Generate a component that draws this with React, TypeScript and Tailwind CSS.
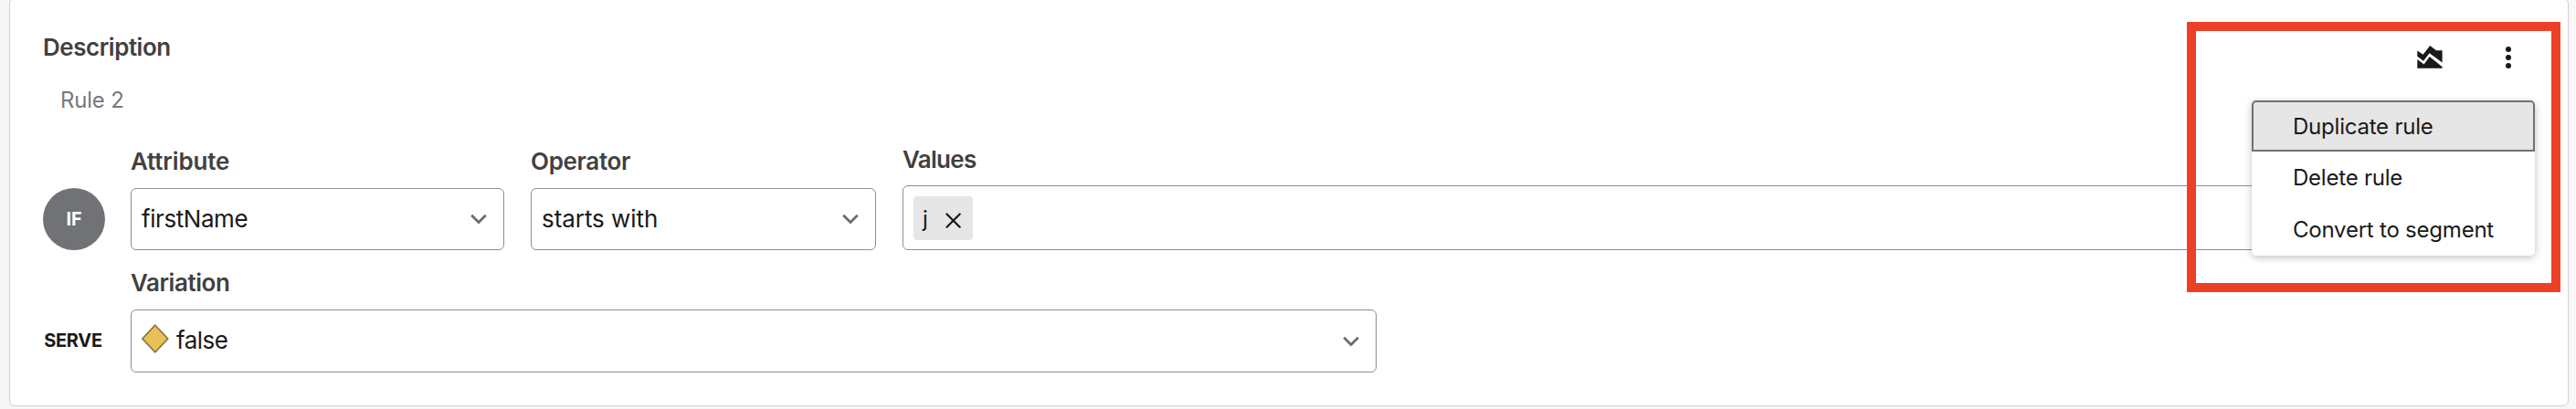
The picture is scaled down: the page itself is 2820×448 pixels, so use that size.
import React from "react";

function Chevron() {
  return (
    <svg width="20" height="14" viewBox="0 0 20 14" fill="none" className="block shrink-0">
      <path d="M2.2 2.8l7.8 7.8 7.8-7.8" stroke="#6c6d72" strokeWidth="2.8" strokeLinecap="butt" />
    </svg>
  );
}

function Label({ children, className }: { children: React.ReactNode; className: string }) {
  return (
    <div className={"h-8 text-[26px] leading-8 font-semibold text-[#414042] whitespace-nowrap " + className}>
      <span>{children}</span>
    </div>
  );
}

function Select({ children, className }: { children: React.ReactNode; className: string }) {
  return (
    <div className={"mt-[13px] flex w-full items-center justify-between rounded-[6px] border border-[#8b8e99] bg-white pr-[17px] pl-[11px] " + className}>
      {children}
      <Chevron />
    </div>
  );
}

function AreaIcon() {
  return (
    <svg width="28" height="26" viewBox="0 0 28 26" fill="#191919" className="block">
      <path d="M.3 5.6l6.3 4.2L14.2 0l6.8 5.3h6.6v13.1L13.6 8.2 7 16.8.3 11.7z" />
      <path d="M.3 15l7.3 5.6 6.1-8.7 13.9 11.3v1.6H.3z" />
    </svg>
  );
}

const valueText = "text-[26px] leading-8 text-[#191919] whitespace-nowrap";
const menuItem = "flex items-start pt-[13px] pl-[45px] text-[24px] leading-8 text-[#191919] whitespace-nowrap tracking-[-0.22px]";

export default function App() {
  return (
    <div className="relative h-[448px] w-[2820px] overflow-hidden bg-[#f7f7f7] font-['Inter',sans-serif]">
      <div className="-mt-[2px] ml-[10px] flex h-[447px] w-[2802px] flex-col rounded-[6px] border border-[#d1d1d3] bg-white pl-[36px]">
        <div className="flex h-[79px] items-start justify-between pt-[37px]">
          <Label className="tracking-[-0.47px]">Description</Label>
          <div className="mr-[62px] flex gap-[69px] pt-[14px]">
            <AreaIcon />
            <svg width="6" height="26" viewBox="0 0 6 26" fill="#191919" className="block">
              <circle cx="3" cy="4" r="3" />
              <circle cx="3" cy="13" r="3" />
              <circle cx="3" cy="22" r="3" />
            </svg>
          </div>
        </div>
        <div className="mt-[16px] ml-[19px] h-8 text-[24px] leading-8 tracking-[-0.2px] text-[#77787c]">
          <span>Rule 2</span>
        </div>
        <div className="mt-[34px] flex h-[114px] items-end">
          <div className="mr-[28px] flex size-[68px] items-center justify-center rounded-full bg-[#717276] text-[20px] font-bold tracking-[-0.3px] text-white">
            IF
          </div>
          <div className="mr-[29px] w-[409px]">
            <Label className="tracking-[-0.16px]">Attribute</Label>
            <Select className="h-[68px]">
              <span className={valueText + " pb-[1px] tracking-[-0.44px]"}>firstName</span>
            </Select>
          </div>
          <div className="mr-[29px] w-[378px]">
            <Label className="tracking-[-0.33px]">Operator</Label>
            <Select className="h-[68px]">
              <span className={valueText + " pb-[1px] tracking-[-0.06px]"}>starts with</span>
            </Select>
          </div>
          <div className="w-[1780px]">
            <Label className="tracking-[-0.7px]">Values</Label>
            <div className="mt-[12px] flex h-[71px] items-center rounded-[6px] border border-[#8b8e99] pt-[1px] pl-[11px]">
              <div className="flex h-12 w-[65px] items-center justify-between rounded-[4px] bg-[#e6e6e6] pr-[12px] pl-[10px] text-[24px] text-[#191919]">
                <span className="pt-[1px]">j</span>
                <svg width="18" height="18" viewBox="0 0 18 18" fill="none" className="mt-[5px] block">
                  <path d="M1.5 1.5l14.2 14.2M15.7 1.5L1.5 15.7" stroke="#191919" strokeWidth="2.2" strokeLinecap="round" />
                </svg>
              </div>
            </div>
          </div>
        </div>
        <div className="mt-[20px] flex items-end">
          <div className="mr-[28px] flex h-[70px] w-[68px] items-center justify-center pr-[2px] text-[20px] font-bold tracking-[-0.3px] text-[#191919]">
            SERVE
          </div>
          <div className="w-[1364px]">
            <Label className="tracking-[-0.45px]">Variation</Label>
            <Select className="h-[69px]">
              <span className="flex items-center pb-[1px]">
                <svg width="30" height="32" viewBox="0 0 30 32" className="-mt-[4px] mr-2 block">
                  <path d="M14.8 1.2L28.8 16 14.8 30.8.9 16z" fill="#e7c157" stroke="#8a7130" strokeWidth="1.6" />
                </svg>
                <span className={valueText + " tracking-[-0.5px]"}>false</span>
              </span>
            </Select>
          </div>
        </div>
      </div>

      <div className="absolute top-[24px] left-[2394px] h-[296px] w-[409px] border-[10px] border-[#ec4026]" />

      <div className="absolute top-[110px] left-[2465px] h-[170px] w-[310px] rounded-[5px] bg-white shadow-[0_2px_8px_rgba(0,0,0,0.25)]">
        <div className={menuItem + " h-[56px] rounded-t-[5px] bg-[#e6e6e6] shadow-[inset_0_0_0_2px_#717276]"}>
          <span>Duplicate rule</span>
        </div>
        <div className={menuItem + " h-[57px]"}>
          <span>Delete rule</span>
        </div>
        <div className={menuItem + " h-[57px]"}>
          <span>Convert to segment</span>
        </div>
      </div>
    </div>
  );
}
